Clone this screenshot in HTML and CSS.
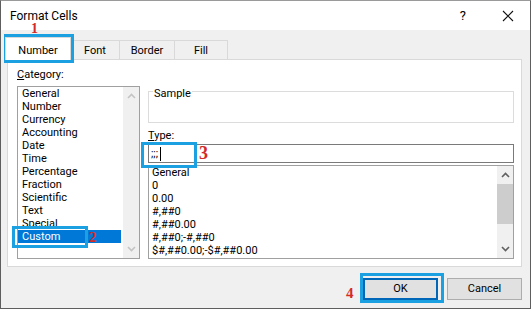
FILE: index.html
```html
<!DOCTYPE html>
<html>
<head>
    <title>Format Cells</title>
    <meta charset="UTF-8">
    <link rel="stylesheet" href="styles.css">
</head>
<body>
<div class="screen">
    <div class="dialog">
        <div class="titlebar">
            <span class="title">Format Cells</span>
            <span class="help">?</span>
            <svg class="close" width="12" height="12" viewBox="0 0 12 12">
                <path d="M1 1 L11 11 M11 1 L1 11" stroke="#111" stroke-width="1.1" fill="none"/>
            </svg>
        </div>

        <div class="body">
            <div class="tabs">
                <div class="tab tab-active">Number</div>
                <div class="tab tab-font">Font</div>
                <div class="tab tab-border">Border</div>
                <div class="tab tab-fill">Fill</div>
            </div>

            <div class="panel">
                <div class="cat-col">
                    <div class="label"><u>C</u>ategory:</div>
                    <div class="listbox cat-list">
                        <div class="items">
                            <div class="item">General</div>
                            <div class="item">Number</div>
                            <div class="item">Currency</div>
                            <div class="item">Accounting</div>
                            <div class="item">Date</div>
                            <div class="item">Time</div>
                            <div class="item">Percentage</div>
                            <div class="item">Fraction</div>
                            <div class="item">Scientific</div>
                            <div class="item">Text</div>
                            <div class="item">Special</div>
                            <div class="item selected">Custom</div>
                        </div>
                        <div class="scrollbar faint">
                            <svg class="arrow" width="9" height="6" viewBox="0 0 9 6"><path d="M1 5 L4.5 1.5 L8 5" /></svg>
                            <div class="track"></div>
                            <svg class="arrow" width="9" height="6" viewBox="0 0 9 6"><path d="M1 1 L4.5 4.5 L8 1" /></svg>
                        </div>
                    </div>
                </div>

                <div class="main-col">
                    <div class="group">
                        <span class="group-label">Sample</span>
                    </div>
                    <div class="label type-label"><u>T</u>ype:</div>
                    <div class="input">;;;<span class="caret"></span></div>
                    <div class="listbox fmt-list">
                        <div class="items">
                            <div class="item">General</div>
                            <div class="item">0</div>
                            <div class="item">0.00</div>
                            <div class="item">#,##0</div>
                            <div class="item">#,##0.00</div>
                            <div class="item">#,##0;-#,##0</div>
                            <div class="item">$#,##0.00;-$#,##0.00</div>
                        </div>
                        <div class="scrollbar">
                            <svg class="arrow" width="9" height="6" viewBox="0 0 9 6"><path d="M1 5 L4.5 1.5 L8 5" /></svg>
                            <div class="thumb"></div>
                            <div class="track"></div>
                            <svg class="arrow" width="9" height="6" viewBox="0 0 9 6"><path d="M1 1 L4.5 4.5 L8 1" /></svg>
                        </div>
                    </div>
                </div>
            </div>

            <div class="buttons">
                <div class="button default">OK</div>
                <div class="button">Cancel</div>
            </div>
        </div>
    </div>

    <!-- tutorial markers drawn over the dialog -->
    <div class="mark mark-1"></div>
    <div class="mark mark-2"></div>
    <div class="mark mark-3"></div>
    <div class="mark mark-4"></div>
    <span class="step step-1">1</span>
    <span class="step step-2">2</span>
    <span class="step step-3">3</span>
    <span class="step step-4">4</span>
</div>
</body>
</html>
```

FILE: styles.css
```css
body {
    margin: 0;
    font-family: Roboto, "Noto Sans", sans-serif;
    font-size: 11px;
    color: #000;
}
.screen {
    position: relative;
    width: 531px;
    height: 309px;
    overflow: hidden;
}
.dialog {
    box-sizing: border-box;
    width: 531px;
    height: 309px;
    border: 1px solid #5e5e5e;
    border-top-color: #9a9a9a;
    background: #f0f0f0;
    display: flex;
    flex-direction: column;
}
.titlebar {
    height: 29px;
    flex-shrink: 0;
    background: #fff;
    display: flex;
    align-items: center;
    padding-left: 9px;
    font-size: 12px;
}
.title {
    flex: 1;
}
.help {
    margin-right: 36px;
    font-size: 13px;
}
.close {
    margin-right: 16px;
}
.body {
    flex: 1;
    padding: 0 8px 0 6px;
    display: flex;
    flex-direction: column;
}

/* tabs */
.tabs {
    display: flex;
    align-items: flex-end;
    height: 22px;
    margin-top: 7px;
}
.tab {
    box-sizing: border-box;
    height: 19px;
    border: 1px solid #d9d9d9;
    border-bottom: none;
    background: #f0f0f0;
    text-align: center;
    line-height: 20px;
    margin-left: -1px;
    overflow: hidden;
}
.tab-active {
    position: relative;
    z-index: 1;
    height: 23px;
    width: 66px;
    margin-left: -2px;
    margin-bottom: -1px;
    background: #fff;
    line-height: 25px;
}
.tab-font {
    width: 50px;
}
.tab-border {
    width: 56px;
}
.tab-fill {
    width: 54px;
}

/* white page under the tabs */
.panel {
    box-sizing: border-box;
    height: 208px;
    background: #fff;
    border: 1px solid #d9d9d9;
    padding: 8px 7px 0 9px;
    display: flex;
    gap: 8px;
}
.label {
    line-height: 14px;
}
.cat-col {
    width: 123px;
    display: flex;
    flex-direction: column;
}
.cat-col .label {
    margin-bottom: 4px;
}
.main-col {
    flex: 1;
    display: flex;
    flex-direction: column;
}
.listbox {
    box-sizing: border-box;
    border: 1px solid #a0a0a0;
    display: flex;
    background: #fff;
}
.cat-list {
    height: 173px;
}
.fmt-list {
    height: 94px;
    margin-top: 2px;
}
.items {
    flex: 1;
}
.item {
    height: 13px;
    line-height: 13px;
    padding-left: 4px;
    white-space: nowrap;
}
.fmt-list .item {
    padding-left: 3px;
}
.selected {
    background: #0078d7;
    color: #fff;
    margin-right: 2px;
}
.scrollbar {
    width: 16px;
    background: #f0f0f0;
    display: flex;
    flex-direction: column;
    align-items: center;
}
.scrollbar .arrow {
    flex-shrink: 0;
    margin: 6px 0;
}
.scrollbar .arrow path {
    fill: none;
    stroke: #606060;
    stroke-width: 1.6;
}
.scrollbar.faint .arrow path {
    stroke: #c4c4c4;
}
.scrollbar .track {
    flex: 1;
}
.thumb {
    width: 16px;
    height: 40px;
    background: #cdcdcd;
}

/* sample group, type box */
.group {
    box-sizing: border-box;
    height: 32px;
    margin-top: 23px;
    border: 1px solid #dcdcdc;
}
.group-label {
    display: inline-block;
    margin: -5px 0 0 4px;
    padding: 0 1px;
    background: #fff;
    line-height: 14px;
    vertical-align: top;
}
.type-label {
    margin-top: 5px;
    line-height: 16px;
}
.input {
    box-sizing: border-box;
    height: 19px;
    border: 1px solid #7a7a7a;
    padding-left: 2px;
    line-height: 17px;
    display: flex;
    align-items: center;
}
.caret {
    display: inline-block;
    width: 0;
    height: 14px;
    border-left: 1px solid #000;
    margin-left: 2px;
}

/* bottom buttons */
.buttons {
    display: flex;
    justify-content: flex-end;
    gap: 9px;
    margin-top: 11px;
}
.button {
    box-sizing: border-box;
    width: 75px;
    height: 22px;
    border: 1px solid #adadad;
    background: #e1e1e1;
    text-align: center;
    line-height: 20px;
}
.button.default {
    border: 2px solid #0066b8;
    line-height: 18px;
}

/* annotation overlays */
.mark {
    position: absolute;
    box-sizing: border-box;
    border: 3px solid #1ba1e2;
}
.mark-1 {
    left: 4px;
    top: 34px;
    width: 70px;
    height: 29px;
}
.mark-2 {
    left: 12px;
    top: 226px;
    width: 76px;
    height: 22px;
}
.mark-3 {
    left: 141px;
    top: 142px;
    width: 56px;
    height: 26px;
}
.mark-4 {
    left: 360px;
    top: 273px;
    width: 84px;
    height: 30px;
}
.step {
    position: absolute;
    font-family: "Liberation Serif", serif;
    font-weight: bold;
    line-height: 1;
    color: #d42a2a;
}
.step-1 {
    left: 31px;
    top: 22px;
    font-size: 14px;
}
.step-2 {
    left: 89px;
    top: 230px;
    font-size: 15px;
}
.step-3 {
    left: 199px;
    top: 144px;
    font-size: 18px;
}
.step-4 {
    left: 346px;
    top: 286px;
    font-size: 15px;
}
```
